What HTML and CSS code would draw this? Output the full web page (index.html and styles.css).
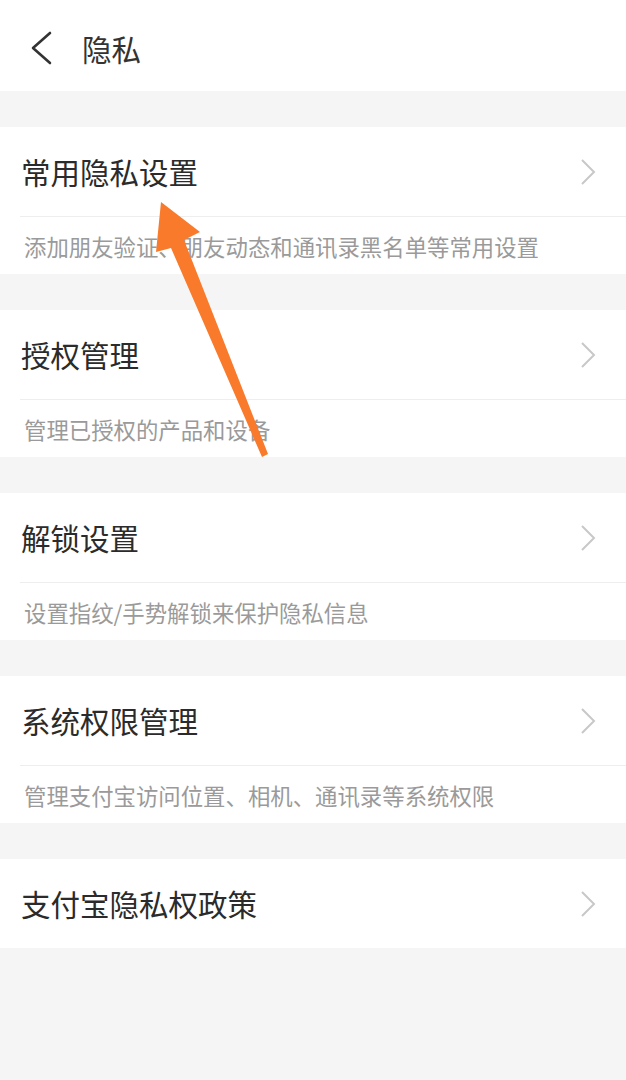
FILE: index.html
```html
<!DOCTYPE html>
<html lang="zh-CN">
<head>
<meta charset="utf-8">
<title>隐私</title>
<link rel="stylesheet" href="styles.css">
</head>
<body>
<div class="page">
  <header class="topbar">
    <svg class="back" width="24" height="36" viewBox="0 0 24 36"><polyline points="20,2 3,17 20,32" fill="none" stroke="#333" stroke-width="2.6" stroke-linecap="round" stroke-linejoin="round"/></svg>
    <span class="page-title">隐私</span>
  </header>

  <section class="card">
    <div class="row"><span class="row-title">常用隐私设置</span><svg class="chev" width="18" height="28" viewBox="0 0 18 28"><polyline points="3,2 15,14 3,26" fill="none" stroke="#c8c8c8" stroke-width="2"/></svg></div>
    <div class="desc">添加朋友验证、朋友动态和通讯录黑名单等常用设置</div>
  </section>

  <section class="card">
    <div class="row"><span class="row-title">授权管理</span><svg class="chev" width="18" height="28" viewBox="0 0 18 28"><polyline points="3,2 15,14 3,26" fill="none" stroke="#c8c8c8" stroke-width="2"/></svg></div>
    <div class="desc">管理已授权的产品和设备</div>
  </section>

  <section class="card">
    <div class="row"><span class="row-title">解锁设置</span><svg class="chev" width="18" height="28" viewBox="0 0 18 28"><polyline points="3,2 15,14 3,26" fill="none" stroke="#c8c8c8" stroke-width="2"/></svg></div>
    <div class="desc">设置指纹/手势解锁来保护隐私信息</div>
  </section>

  <section class="card">
    <div class="row"><span class="row-title">系统权限管理</span><svg class="chev" width="18" height="28" viewBox="0 0 18 28"><polyline points="3,2 15,14 3,26" fill="none" stroke="#c8c8c8" stroke-width="2"/></svg></div>
    <div class="desc">管理支付宝访问位置、相机、通讯录等系统权限</div>
  </section>

  <section class="card">
    <div class="row"><span class="row-title">支付宝隐私权政策</span><svg class="chev" width="18" height="28" viewBox="0 0 18 28"><polyline points="3,2 15,14 3,26" fill="none" stroke="#c8c8c8" stroke-width="2"/></svg></div>
  </section>

  <svg class="arrow" width="626" height="1080" viewBox="0 0 626 1080">
    <polygon fill="#f97a2b" points="161,202 200,232 184,240 268,454 262,457 171,248 156,252"/>
  </svg>
</div>
</body>
</html>
```
FILE: styles.css
```css
* { box-sizing: border-box; }
html, body { margin: 0; padding: 0; }
body {
  background: #f5f5f5;
  font-family: "Noto Sans CJK SC", "Noto Sans", sans-serif;
  width: 626px;
  min-height: 1080px;
}
.page {
  position: relative;
  width: 626px;
  min-height: 1080px;
  display: flex;
  flex-direction: column;
  gap: 36px;
}
.topbar {
  height: 91px;
  background: #fff;
  display: flex;
  align-items: center;
  padding: 6px 0 0 30px;
  gap: 28px;
}
.back { display: block; }
.page-title {
  font-size: 29.5px;
  color: #333;
  line-height: 1;
}
.card {
  background: #fff;
}
.row {
  height: 89px;
  display: flex;
  align-items: center;
  justify-content: space-between;
  padding: 0 29px 0 21px;
}
.row-title {
  font-size: 29.5px;
  color: #2b2b2b;
  line-height: 1;
}
.chev { display: block; }
.desc {
  margin-left: 20px;
  border-top: 1px solid #eeeeee;
  height: 58px;
  display: flex;
  align-items: center;
  padding-left: 4px;
  font-size: 22.4px;
  color: #9a9a9a;
}
.arrow {
  position: absolute;
  left: 0;
  top: 0;
  pointer-events: none;
}
```
